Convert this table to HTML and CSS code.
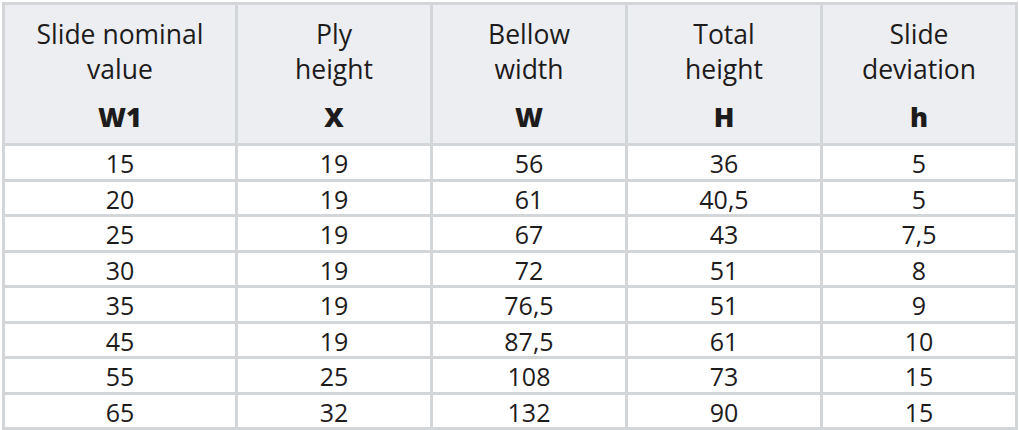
FILE: index.html
```html
<!DOCTYPE html>
<html>
<head>
<meta charset="utf-8">
<link rel="stylesheet" href="styles.css">
</head>
<body>
<table class="spec">
  <colgroup>
    <col class="c-first"><col class="c"><col class="c"><col class="c"><col class="c">
  </colgroup>
  <thead>
    <tr>
      <th><div class="label">Slide nominal<br>value</div><div class="sym">W1</div></th>
      <th><div class="label">Ply<br>height</div><div class="sym">X</div></th>
      <th><div class="label">Bellow<br>width</div><div class="sym">W</div></th>
      <th><div class="label">Total<br>height</div><div class="sym">H</div></th>
      <th><div class="label">Slide<br>deviation</div><div class="sym">h</div></th>
    </tr>
  </thead>
  <tbody>
    <tr><td>15</td><td>19</td><td>56</td><td>36</td><td>5</td></tr>
    <tr><td>20</td><td>19</td><td>61</td><td>40,5</td><td>5</td></tr>
    <tr><td>25</td><td>19</td><td>67</td><td>43</td><td>7,5</td></tr>
    <tr><td>30</td><td>19</td><td>72</td><td>51</td><td>8</td></tr>
    <tr><td>35</td><td>19</td><td>76,5</td><td>51</td><td>9</td></tr>
    <tr><td>45</td><td>19</td><td>87,5</td><td>61</td><td>10</td></tr>
    <tr><td>55</td><td>25</td><td>108</td><td>73</td><td>15</td></tr>
    <tr><td>65</td><td>32</td><td>132</td><td>90</td><td>15</td></tr>
  </tbody>
</table>
</body>
</html>
```

FILE: styles.css
```css
html, body {
  margin: 0;
  padding: 0;
  background: #ffffff;
}
body {
  padding: 2px 0 0 2px;
  font-family: "Open Sans", "Noto Sans", sans-serif;
  color: #1e1b1c;
}
.spec {
  border-collapse: collapse;
  table-layout: fixed;
  width: 1013px;
}
.c-first { width: 233px; }
.c { width: 195px; }
.spec th, .spec td {
  border: 3px solid #d2d6d9;
  text-align: center;
  padding: 0;
}
.spec th {
  background: #eceef1;
  height: 138px;
  vertical-align: middle;
  font-weight: normal;
}
.label {
  font-size: 26.5px;
  line-height: 35px;
}
.sym {
  font-size: 27px;
  font-weight: 800;
  line-height: 30px;
  margin-top: 15px;
}
.spec td {
  height: 30.5px;
  font-size: 25px;
  line-height: 30px;
  padding-top: 2px;
}
```
